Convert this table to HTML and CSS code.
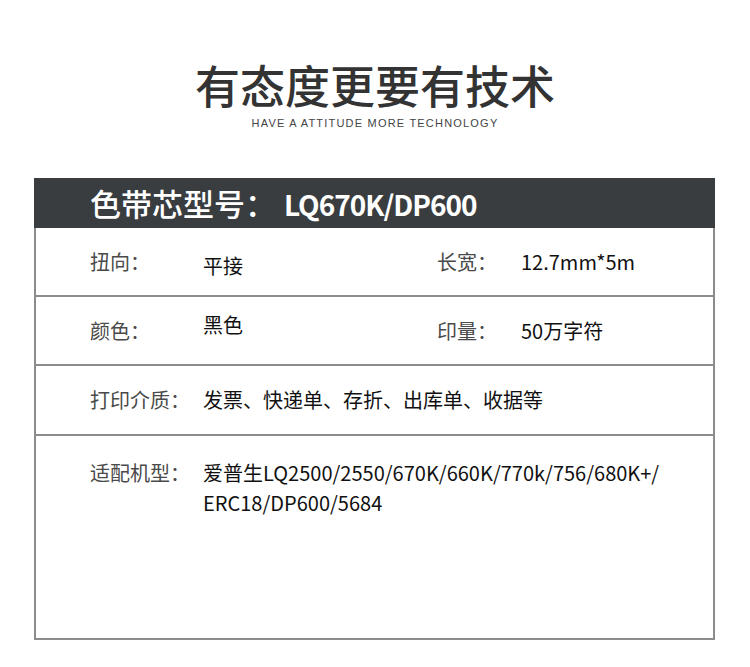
FILE: index.html
```html
<!DOCTYPE html>
<html lang="zh">
<head>
  <meta charset="UTF-8" />
  <title>色带芯参数</title>
  <link rel="stylesheet" href="styles.css">
</head>
<body>

<header class="hero">
  <h1>有态度更要有技术</h1>
  <p class="hero-sub">HAVE A ATTITUDE MORE TECHNOLOGY</p>
</header>

<!-- 参数表 -->
<div class="spec">
  <div class="spec-head">色带芯型号：<span class="model">LQ670K/DP600</span></div>

  <div class="spec-row">
    <span class="lbl">扭向：</span>
    <span class="val val-low">平接</span>
    <span class="lbl">长宽：</span>
    <span class="val">12.7mm*5m</span>
  </div>

  <div class="spec-row">
    <span class="lbl">颜色：</span>
    <span class="val val-high">黑色</span>
    <span class="lbl">印量：</span>
    <span class="val">50万字符</span>
  </div>

  <div class="spec-row row-wide">
    <span class="lbl">打印介质：</span>
    <span class="val">发票、快递单、存折、出库单、收据等</span>
  </div>

  <div class="spec-row row-wide row-last">
    <span class="lbl">适配机型：</span>
    <span class="val">爱普生LQ2500/2550/670K/660K/770k/756/680K+/<br>ERC18/DP600/5684</span>
  </div>
</div>

</body>
</html>
```

FILE: styles.css
```css
* {
  margin: 0;
  padding: 0;
  box-sizing: border-box;
}

body {
  background: #fff;
  font-family: "Noto Sans CJK SC", "Noto Sans", sans-serif;
  color: #222;
}

.hero {
  padding-top: 55px;
  text-align: center;
}

.hero h1 {
  font-size: 45px;
  line-height: 60px;
  font-weight: 500;
  color: #333;
}

.hero-sub {
  font-family: "Liberation Sans", Arial, sans-serif;
  font-size: 11px;
  line-height: 16px;
  letter-spacing: 1.2px;
  color: #444;
}

.spec {
  margin: 47px 35px 0 34px;
  border: 2px solid #8c8c8c;
  border-top: 0;
}

.spec-head {
  margin: 0 -2px;
  height: 50px;
  padding-left: 56px;
  background: #3a3d40;
  color: #fff;
  font-size: 31px;
  font-weight: 500;
  line-height: 50px;
}

.spec-head .model {
  margin-left: 8px;
  font-size: 28px;
  font-weight: 700;
  letter-spacing: -1px;
}

.spec-row {
  display: grid;
  grid-template-columns: 113px 234px 84px 1fr;
  align-items: center;
  height: 69px;
  padding-left: 54px;
  border-bottom: 2px solid #8c8c8c;
  font-size: 20px;
  line-height: 30px;
}

.row-wide {
  grid-template-columns: 113px 1fr;
  height: 70px;
}

.row-last {
  align-items: start;
  height: 202px;
  padding-top: 22px;
  border-bottom: 0;
}

.lbl {
  color: #4a4a4a;
}

.val {
  color: #111;
}

.val-low {
  margin-top: 8px;
}

.val-high {
  margin-bottom: 12px;
}
```
